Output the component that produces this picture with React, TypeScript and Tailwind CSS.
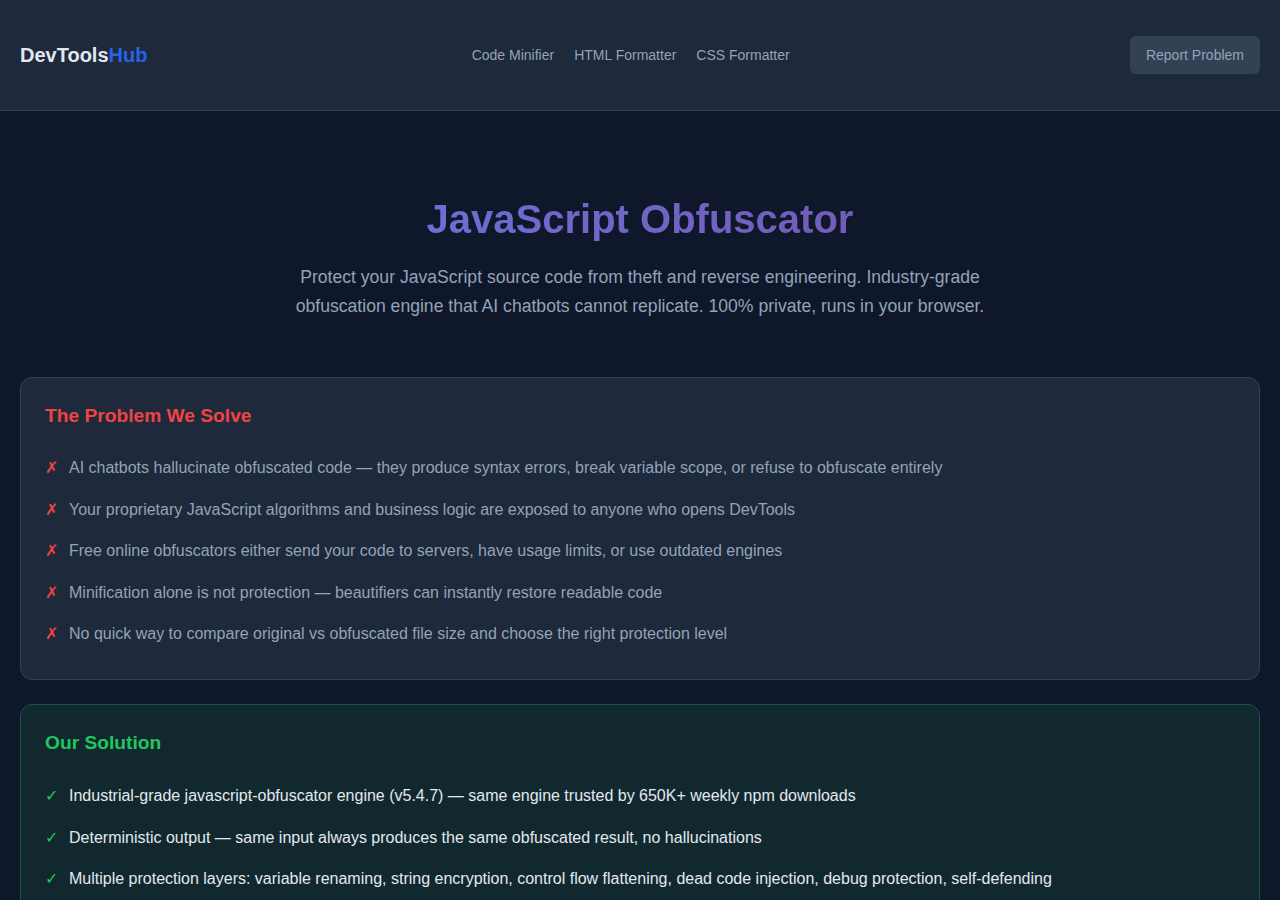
import { Fragment } from "react";

const problems = [
  "AI chatbots hallucinate obfuscated code — they produce syntax errors, break variable scope, or refuse to obfuscate entirely",
  "Your proprietary JavaScript algorithms and business logic are exposed to anyone who opens DevTools",
  "Free online obfuscators either send your code to servers, have usage limits, or use outdated engines",
  "Minification alone is not protection — beautifiers can instantly restore readable code",
  "No quick way to compare original vs obfuscated file size and choose the right protection level",
];

const solutions = [
  "Industrial-grade javascript-obfuscator engine (v5.4.7) — same engine trusted by 650K+ weekly npm downloads",
  "Deterministic output — same input always produces the same obfuscated result, no hallucinations",
  "Multiple protection layers: variable renaming, string encryption, control flow flattening, dead code injection, debug protection, self-defending",
  "100% client-side processing — your code never leaves your browser",
  "Instant size comparison between original and obfuscated output",
];

function Header() {
  return (
    <header className="bg-[#1e293b] border-b border-[#334155] px-5 py-9 flex items-center justify-between">
      <a className="text-[20px] leading-[28px] font-bold text-[#e2e8f0]">
        DevTools<span className="text-[#2563eb]">Hub</span>
      </a>
      <nav className="flex items-center gap-5 mr-4 text-sm text-[#94a3b8]">
        <a>Code Minifier</a>
        <a>HTML Formatter</a>
        <a>CSS Formatter</a>
      </nav>
      <button className="bg-[#334155] text-[#94a3b8] text-sm leading-5 px-4 py-[9px] rounded-md">
        Report Problem
      </button>
    </header>
  );
}

export default function App() {
  return (
    <div
      className="min-h-screen bg-[#0f172a]"
      style={{ fontFamily: '"Liberation Sans", Arial, sans-serif' }}
    >
      <Header />

      <main className="px-5">
        {/* Hero */}
        <section className="pt-[84px] pb-[56px] text-center">
          <h1 className="text-[40px] leading-[48px] font-bold bg-gradient-to-r from-[#667eea] to-[#764ba2] bg-clip-text text-transparent mb-5">
            JavaScript Obfuscator
          </h1>
          <p className="max-w-[700px] mx-auto text-[17.6px] leading-[29px] text-[#94a3b8]">
            Protect your JavaScript source code from theft and reverse engineering. Industry-grade
            obfuscation engine that AI chatbots cannot replicate. 100% private, runs in your browser.
          </p>
        </section>

        {/* Problem */}
        <section className="bg-[#1e293b] border border-[#334155] rounded-xl p-6 mb-6">
          <h2 className="text-[19.2px] leading-[28px] font-bold text-[#ef4444] mb-[17px]">
            The Problem We Solve
          </h2>
          <ul>
            {problems.map((p) => (
              <li key={p} className="flex py-2 text-base leading-[1.6] text-[#94a3b8]">
                <span className="w-6 shrink-0 text-[#ef4444]">✗</span>
                <span>{p}</span>
              </li>
            ))}
          </ul>
        </section>

        {/* Solution */}
        <section className="bg-[#12282f] border border-[#16573f] rounded-xl p-6 mb-6">
          <h2 className="text-[19.2px] leading-[28px] font-bold text-[#22c55e] mb-[18px]">
            Our Solution
          </h2>
          <ul>
            {solutions.map((s) => (
              <Fragment key={s}>
                <li className="flex py-2 text-base leading-[1.6] text-[#e2e8f0]">
                  <span className="w-6 shrink-0 text-[#22c55e]">✓</span>
                  <span>{s}</span>
                </li>
              </Fragment>
            ))}
          </ul>
        </section>
      </main>
    </div>
  );
}
